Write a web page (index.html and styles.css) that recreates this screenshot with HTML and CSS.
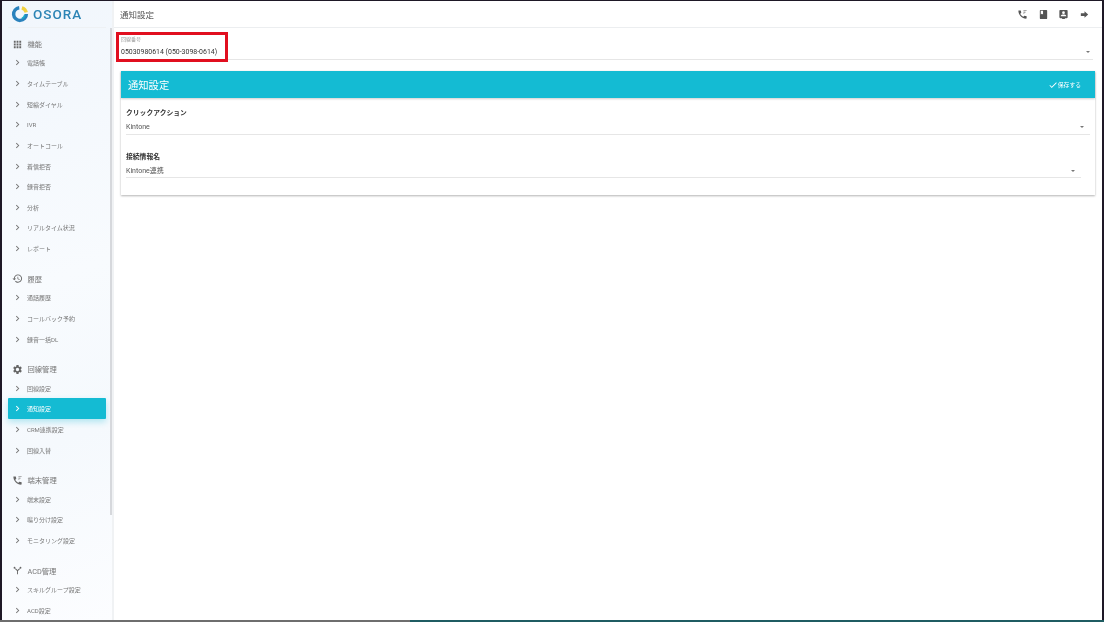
FILE: index.html
```html
<!DOCTYPE html>
<html lang="ja">
<head>
    <meta charset="UTF-8">
    <title>通知設定</title>
    <link rel="stylesheet" href="styles.css">
</head>
<body>
    <div class="window">
        <aside class="sidebar">
            <div class="logo">
                <svg class="logo-mark" viewBox="0 0 24 24">
                    <path d="M20.500 12A8.500 8.500 0 1 1 11 3.600" fill="none" stroke="#2a82bd" stroke-width="4.600"/>
                    <path d="M14.500 3.900A8.500 8.500 0 0 1 20.300 9.800" fill="none" stroke="#f0d040" stroke-width="4.600"/>
                    <path d="M18.500 13A6.500 6.500 0 0 1 14.500 18" fill="none" stroke="#17a9c9" stroke-width="2.200"/>
                </svg>
                <span class="logo-text">OSORA</span>
            </div>
            <div class="menu">
                <section class="group">
                    <div class="group-head">
                        <svg class="group-icon" viewBox="0 0 24 24"><path d="M4 8h4V4H4v4zm6 12h4v-4h-4v4zm-6 0h4v-4H4v4zm0-6h4v-4H4v4zm6 0h4v-4h-4v4zm6-10v4h4V4h-4zm-6 4h4V4h-4v4zm6 6h4v-4h-4v4zm0 6h4v-4h-4v4z"/></svg>
                        機能
                    </div>
                    <a class="item"><svg viewBox="0 0 24 24"><path d="M8.590 16.590L13.170 12 8.590 7.410 10 6l6 6-6 6z"/></svg>電話帳</a>
                    <a class="item"><svg viewBox="0 0 24 24"><path d="M8.590 16.590L13.170 12 8.590 7.410 10 6l6 6-6 6z"/></svg>タイムテーブル</a>
                    <a class="item"><svg viewBox="0 0 24 24"><path d="M8.590 16.590L13.170 12 8.590 7.410 10 6l6 6-6 6z"/></svg>短縮ダイヤル</a>
                    <a class="item"><svg viewBox="0 0 24 24"><path d="M8.590 16.590L13.170 12 8.590 7.410 10 6l6 6-6 6z"/></svg>IVR</a>
                    <a class="item"><svg viewBox="0 0 24 24"><path d="M8.590 16.590L13.170 12 8.590 7.410 10 6l6 6-6 6z"/></svg>オートコール</a>
                    <a class="item"><svg viewBox="0 0 24 24"><path d="M8.590 16.590L13.170 12 8.590 7.410 10 6l6 6-6 6z"/></svg>着信拒否</a>
                    <a class="item"><svg viewBox="0 0 24 24"><path d="M8.590 16.590L13.170 12 8.590 7.410 10 6l6 6-6 6z"/></svg>録音拒否</a>
                    <a class="item"><svg viewBox="0 0 24 24"><path d="M8.590 16.590L13.170 12 8.590 7.410 10 6l6 6-6 6z"/></svg>分析</a>
                    <a class="item"><svg viewBox="0 0 24 24"><path d="M8.590 16.590L13.170 12 8.590 7.410 10 6l6 6-6 6z"/></svg>リアルタイム状況</a>
                    <a class="item"><svg viewBox="0 0 24 24"><path d="M8.590 16.590L13.170 12 8.590 7.410 10 6l6 6-6 6z"/></svg>レポート</a>
                </section>
                <section class="group">
                    <div class="group-head">
                        <svg class="group-icon" viewBox="0 0 24 24"><path d="M13 3c-4.970 0-9 4.030-9 9H1l3.890 3.890.07.14L9 12H6c0-3.870 3.130-7 7-7s7 3.130 7 7-3.130 7-7 7c-1.930 0-3.680-.79-4.940-2.060l-1.420 1.420C8.270 19.990 10.510 21 13 21c4.970 0 9-4.030 9-9s-4.030-9-9-9zm-1 5v5l4.280 2.540.72-1.210-3.500-2.080V8H12z"/></svg>
                        履歴
                    </div>
                    <a class="item"><svg viewBox="0 0 24 24"><path d="M8.590 16.590L13.170 12 8.590 7.410 10 6l6 6-6 6z"/></svg>通話履歴</a>
                    <a class="item"><svg viewBox="0 0 24 24"><path d="M8.590 16.590L13.170 12 8.590 7.410 10 6l6 6-6 6z"/></svg>コールバック予約</a>
                    <a class="item"><svg viewBox="0 0 24 24"><path d="M8.590 16.590L13.170 12 8.590 7.410 10 6l6 6-6 6z"/></svg>録音一括DL</a>
                </section>
                <section class="group">
                    <div class="group-head">
                        <svg class="group-icon" viewBox="0 0 24 24"><path d="M19.140 12.940c.04-.3.06-.61.06-.94 0-.32-.02-.64-.07-.94l2.030-1.580c.18-.14.23-.41.12-.61l-1.920-3.320c-.12-.22-.37-.29-.59-.22l-2.390.96c-.5-.38-1.030-.7-1.620-.94l-.36-2.540c-.04-.24-.24-.41-.48-.41h-3.840c-.24 0-.43.17-.47.41l-.36 2.540c-.59.24-1.130.57-1.620.94l-2.390-.96c-.22-.08-.47 0-.59.22L2.740 8.870c-.12.21-.08.47.12.61l2.030 1.580c-.05.3-.09.63-.09.94s.02.64.07.94l-2.030 1.580c-.18.14-.23.41-.12.61l1.920 3.320c.12.22.37.29.59.22l2.390-.96c.5.38 1.030.7 1.620.94l.36 2.540c.05.24.24.41.48.41h3.840c.24 0 .44-.17.47-.41l.36-2.540c.59-.24 1.130-.56 1.620-.94l2.390.96c.22.08.47 0 .59-.22l1.920-3.320c.12-.22.07-.47-.12-.61l-2.010-1.580zM12 15.600c-1.980 0-3.600-1.620-3.600-3.600s1.620-3.600 3.600-3.600 3.600 1.620 3.600 3.600-1.620 3.600-3.600 3.600z"/></svg>
                        回線管理
                    </div>
                    <a class="item"><svg viewBox="0 0 24 24"><path d="M8.590 16.590L13.170 12 8.590 7.410 10 6l6 6-6 6z"/></svg>回線設定</a>
                    <a class="item active"><svg viewBox="0 0 24 24"><path d="M8.590 16.590L13.170 12 8.590 7.410 10 6l6 6-6 6z"/></svg>通知設定</a>
                    <a class="item"><svg viewBox="0 0 24 24"><path d="M8.590 16.590L13.170 12 8.590 7.410 10 6l6 6-6 6z"/></svg>CRM連携設定</a>
                    <a class="item"><svg viewBox="0 0 24 24"><path d="M8.590 16.590L13.170 12 8.590 7.410 10 6l6 6-6 6z"/></svg>回線入替</a>
                </section>
                <section class="group">
                    <div class="group-head">
                        <svg class="group-icon" viewBox="0 0 24 24"><path d="M20 15.400c-1.200 0-2.400-.2-3.500-.6-.35-.1-.75 0-1 .25l-1.600 2c-2.800-1.350-5.500-3.900-6.900-6.850l2-1.650c.25-.3.35-.7.2-1-.35-1.100-.55-2.300-.55-3.550 0-.55-.45-1-1-1H4.200C3.650 3 3 3.250 3 4c0 9.300 7.700 17 17 17 .7 0 1-.65 1-1.200v-3.400c0-.55-.45-1-1-1z"/><path d="M14 3h7v1.500h-7zM14 6h4.500v1.500H14zM14 9h2v1.500h-2z"/></svg>
                        端末管理
                    </div>
                    <a class="item"><svg viewBox="0 0 24 24"><path d="M8.590 16.590L13.170 12 8.590 7.410 10 6l6 6-6 6z"/></svg>端末設定</a>
                    <a class="item"><svg viewBox="0 0 24 24"><path d="M8.590 16.590L13.170 12 8.590 7.410 10 6l6 6-6 6z"/></svg>鳴り分け設定</a>
                    <a class="item"><svg viewBox="0 0 24 24"><path d="M8.590 16.590L13.170 12 8.590 7.410 10 6l6 6-6 6z"/></svg>モニタリング設定</a>
                </section>
                <section class="group">
                    <div class="group-head">
                        <svg class="group-icon" viewBox="0 0 24 24"><path d="M11 20v-7L6.500 8.500 8 7l4 4 4-4 1.500 1.500L13 13v7z"/><circle cx="5.500" cy="6" r="2"/><circle cx="18.500" cy="6" r="2"/></svg>
                        ACD管理
                    </div>
                    <a class="item"><svg viewBox="0 0 24 24"><path d="M8.590 16.590L13.170 12 8.590 7.410 10 6l6 6-6 6z"/></svg>スキルグループ設定</a>
                    <a class="item"><svg viewBox="0 0 24 24"><path d="M8.590 16.590L13.170 12 8.590 7.410 10 6l6 6-6 6z"/></svg>ACD設定</a>
                </section>
            </div>
            <div class="scroll-thumb"></div>
        </aside>

        <main class="content">
            <header class="topbar">
                <span class="page-title">通知設定</span>
                <div class="top-icons">
                    <svg viewBox="0 0 24 24"><path d="M20 15.400c-1.200 0-2.400-.2-3.500-.6-.35-.1-.75 0-1 .25l-1.600 2c-2.800-1.350-5.500-3.900-6.900-6.850l2-1.650c.25-.3.35-.7.2-1-.35-1.100-.55-2.300-.55-3.550 0-.55-.45-1-1-1H4.200C3.650 3 3 3.250 3 4c0 9.300 7.700 17 17 17 .7 0 1-.65 1-1.200v-3.400c0-.55-.45-1-1-1z"/><path d="M14 3h7v1.500h-7zM14 6h4.500v1.500H14zM14 9h2v1.500h-2z"/></svg>
                    <svg viewBox="0 0 24 24"><path d="M18 2H6c-1.100 0-2 .9-2 2v16c0 1.100.9 2 2 2h12c1.100 0 2-.9 2-2V4c0-1.100-.9-2-2-2zM6 4h5v8l-2.500-1.500L6 12V4z"/></svg>
                    <svg viewBox="0 0 24 24"><path fill-rule="evenodd" d="M5 2h14c1.100 0 2 .9 2 2v14c0 1.100-.9 2-2 2h-4v2H9v-2H5c-1.100 0-2-.9-2-2V4c0-1.100.9-2 2-2zm7 3a3 3 0 1 0 0 6 3 3 0 0 0 0-6zm-6 11h12v-1c0-2-4-3-6-3s-6 1-6 3z"/></svg>
                    <svg viewBox="0 0 24 24"><path d="M4 9h8V5l8 7-8 7v-4H4z"/></svg>
                </div>
            </header>

            <div class="line-select">
                <div class="line-label">回線番号</div>
                <div class="line-value">05030980614 (050-3098-0614)</div>
                <span class="caret"></span>
                <div class="red-box"></div>
            </div>

            <div class="card">
                <div class="card-head">
                    <span class="card-title">通知設定</span>
                    <span class="save">
                        <svg viewBox="0 0 24 24"><path d="M9 16.170L4.830 12l-1.410 1.410L9 19 21 7l-1.410-1.410z"/></svg>保存する
                    </span>
                </div>
                <div class="field field-wide">
                    <div class="field-label">クリックアクション</div>
                    <div class="field-value">Kintone<span class="caret"></span></div>
                </div>
                <div class="field field-narrow">
                    <div class="field-label">接続情報名</div>
                    <div class="field-value">Kintone連携<span class="caret"></span></div>
                </div>
            </div>
        </main>
    </div>
    <div class="taskbar">
        <div class="taskbar-left"></div>
        <div class="taskbar-right"></div>
    </div>
</body>
</html>
```

FILE: styles.css
```css
html, body {
    height: 100%;
}
body {
    margin: 0;
    background: #1e1826;
    color: #555;
    font-family: 'Roboto', 'Noto Sans CJK JP', sans-serif;
    overflow: hidden;
    display: flex;
    flex-direction: column;
}
.window {
    height: 619px;
    margin: 1px 2px 0 2px;
    background: #fff;
    display: flex;
    overflow: hidden;
    filter: blur(0.3px);
}
.taskbar {
    height: 2px;
    display: flex;
}
.taskbar-left {
    width: 410px;
    background: #6e6e6e;
}
.taskbar-right {
    flex: 1;
    background: #1f5c62;
}

/* sidebar */
.sidebar {
    width: 110px;
    flex-shrink: 0;
    position: relative;
    background: linear-gradient(160deg, #f1f6fc 0%, #f8fbfe 45%, #f5f9fd 70%, #fcfdff 100%);
    border-right: 2px solid #f0f2f4;
    overflow: hidden;
}
.scroll-thumb {
    position: absolute;
    top: 27px;
    right: 0;
    width: 2px;
    height: 487px;
    background: #d6d8dc;
}
.logo {
    height: 27px;
    margin: 0 6px;
    padding-left: 3px;
    display: flex;
    align-items: center;
    gap: 4px;
    border-bottom: 1px solid #eef1f4;
    box-sizing: border-box;
}
.logo-mark {
    width: 18px;
    height: 18px;
}
.logo-text {
    font-size: 13.500px;
    font-weight: 500;
    letter-spacing: 1px;
    color: #2b84b5;
}
.menu {
    padding-top: 7.500px;
}
.group {
    margin-bottom: 11.500px;
}
.group-head {
    height: 17px;
    display: flex;
    align-items: center;
    gap: 5px;
    padding-left: 9.500px;
    font-size: 7.300px;
    color: #777;
}
.group-icon {
    width: 11px;
    height: 11px;
    fill: #666;
}
.item {
    height: 20.650px;
    margin: 0 6px;
    padding-left: 3.500px;
    display: flex;
    align-items: center;
    gap: 4.500px;
    font-size: 6px;
    color: #777;
    border-radius: 1px;
}
.item svg {
    width: 11px;
    height: 11px;
    fill: #777;
    flex-shrink: 0;
}
.item.active {
    background: #14bbd3;
    color: #fff;
    box-shadow: 0 3px 6px rgba(20, 187, 211, 0.3);
}
.item.active svg {
    fill: #fff;
}

/* main area */
.content {
    flex: 1;
    min-width: 0;
}
.topbar {
    height: 27px;
    padding-left: 6px;
    display: flex;
    align-items: center;
    justify-content: space-between;
    border-bottom: 1px solid #eceef0;
    box-sizing: border-box;
}
.page-title {
    font-size: 8.500px;
    color: #555;
}
.top-icons {
    display: flex;
    gap: 9.500px;
    padding-right: 12.500px;
}
.top-icons svg {
    width: 11px;
    height: 11px;
    fill: #555;
}
.line-select {
    position: relative;
    height: 32px;
    margin: 0 9px 0 5px;
    padding: 8px 0 0 2px;
    box-sizing: border-box;
    border-bottom: 1px solid #e6e6e6;
}
.line-label {
    font-size: 5px;
    line-height: 6px;
    color: #999;
}
.line-value {
    margin-top: 5px;
    font-size: 6.950px;
    line-height: 10px;
    color: #333;
}
.caret {
    position: absolute;
    right: 3px;
    top: 50%;
    border-left: 2.500px solid transparent;
    border-right: 2.500px solid transparent;
    border-top: 2.500px solid #777;
}
.line-select .caret {
    top: 23px;
}
.red-box {
    position: absolute;
    left: -3px;
    top: 4px;
    width: 106px;
    height: 24px;
    border: 3px solid #e10f1f;
}
.card {
    margin: 11px 7px 0 7px;
    padding-bottom: 17px;
    background: #fff;
    box-shadow: 0 1px 2px rgba(0, 0, 0, 0.3);
}
.card-head {
    height: 27px;
    padding: 0 14px 0 7px;
    display: flex;
    align-items: center;
    justify-content: space-between;
    background: #14bbd3;
    color: #fff;
    box-shadow: 0 1px 2px rgba(0, 0, 0, 0.2);
}
.card-title {
    font-size: 10.300px;
}
.save {
    display: flex;
    align-items: center;
    font-size: 5.800px;
}
.save svg {
    width: 10px;
    height: 10px;
    fill: #fff;
}
.field {
    margin-left: 5px;
    padding-top: 10px;
}
.field-wide {
    margin-right: 5px;
}
.field-narrow {
    margin-right: 14px;
    padding-top: 17px;
}
.field-label {
    font-size: 6.800px;
    line-height: 10px;
    font-weight: 700;
    color: #333;
}
.field-value {
    position: relative;
    height: 17px;
    padding-top: 5px;
    box-sizing: border-box;
    font-size: 7px;
    line-height: 9px;
    color: #555;
    border-bottom: 1px solid #e6e6e6;
}
.field-narrow .field-value {
    height: 16px;
}
.field-value .caret {
    right: 6px;
    top: 8px;
}
```
